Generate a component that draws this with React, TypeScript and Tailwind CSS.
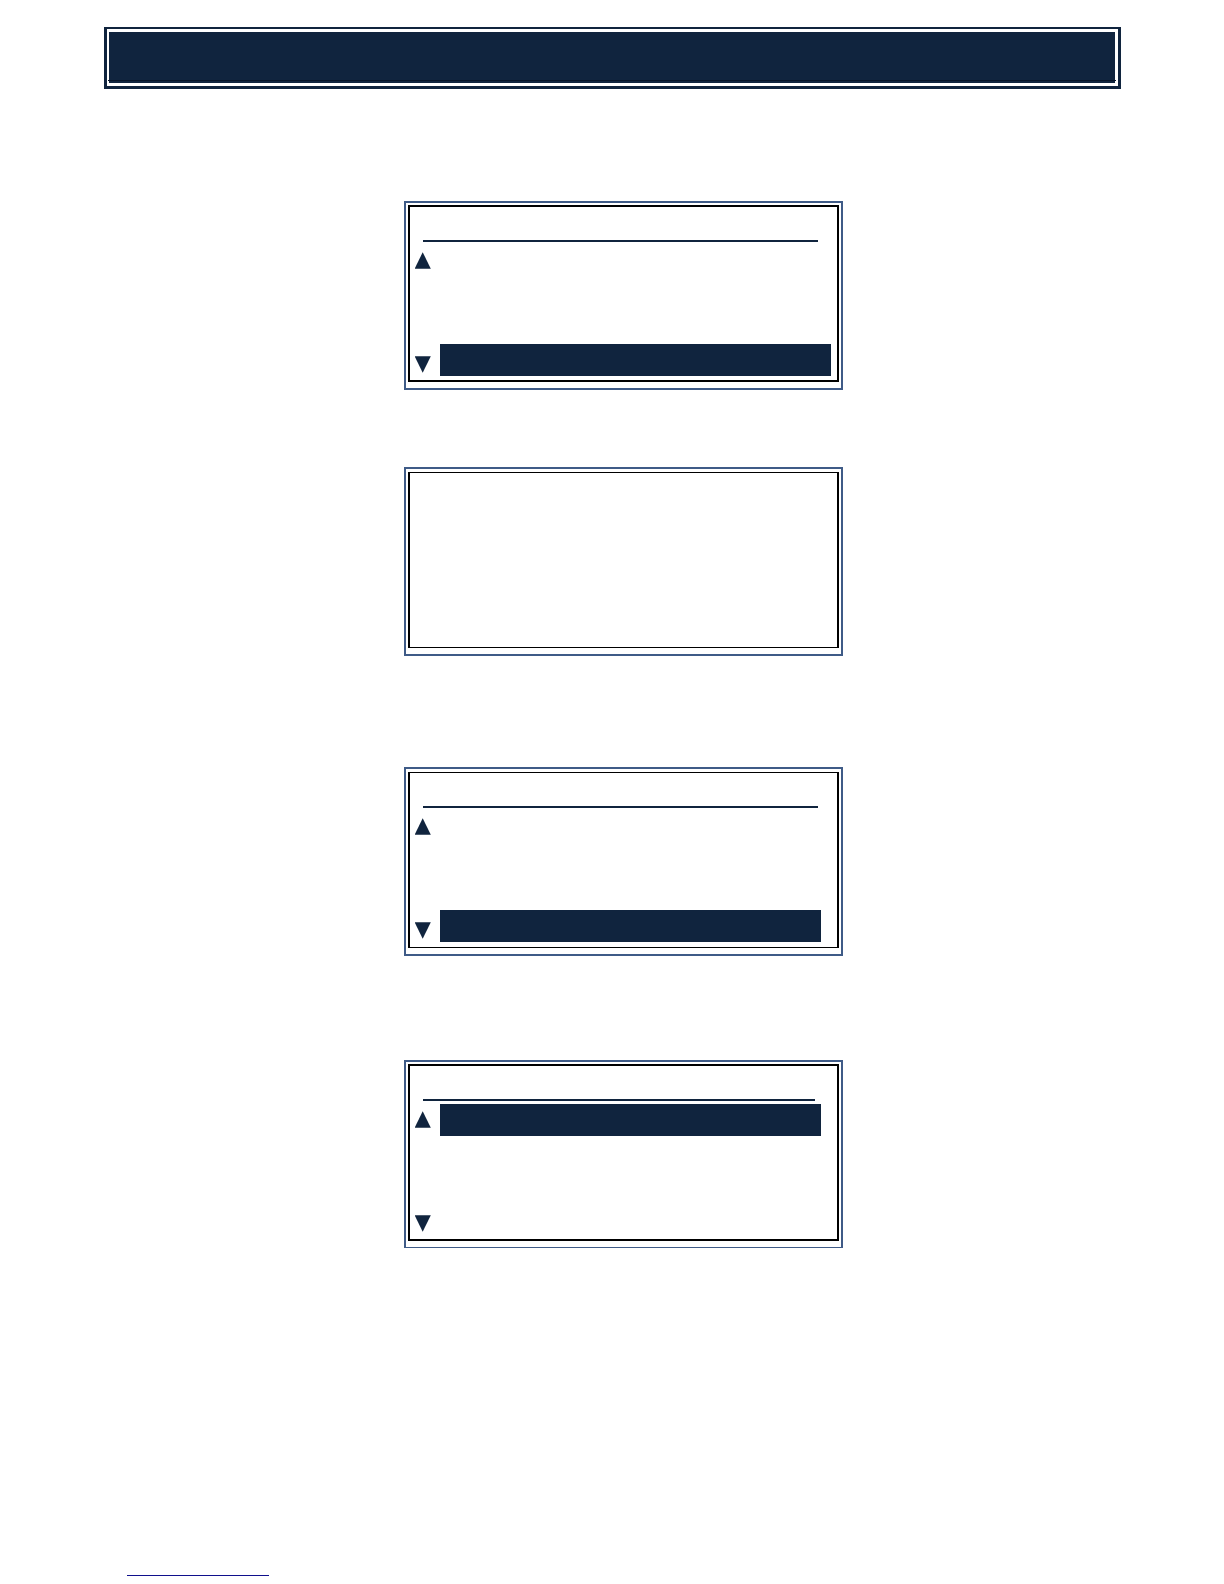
import React from "react";
import clsx from "clsx";

type ScreenProps = {
  thin?: boolean;
  className?: string;
  ruleClass?: string;
  barClass?: string;
  selected?: number;
  empty?: boolean;
};

const rows = [0, 1, 2, 3];

const Arrow = ({ down = false }: { down?: boolean }) => (
  <svg
    width="16"
    height="17"
    viewBox="0 0 16 17"
    fill="#10243e"
    aria-hidden="true"
  >
    <path d={down ? "M-0.3 0.3H15.8L7.7 16.8Z" : "M7.7 0.2L15.8 16.7H-0.3Z"} />
  </svg>
);

const Screen = ({
  thin = false,
  className,
  ruleClass = "mr-[19px]",
  barClass = "mr-4",
  selected,
  empty = false,
}: ScreenProps) => (
  <section
    className={clsx(
      "w-[439px] max-w-full border-2 border-[#3f5b87] px-[2px] pb-[6px]",
      thin ? "pt-[3px]" : "pt-[2px]",
      className
    )}
  >
    <div
      className={clsx(
        "border-x-2 border-black",
        thin ? "border-y pb-[5px]" : "border-y-2 pb-1"
      )}
    >
      {/* title line */}
      <div
        className={clsx(
          "ml-[13px] h-[35px] border-b-2",
          empty ? "border-transparent" : "border-[#10243e]",
          ruleClass
        )}
      />
      <div className="flex gap-[9px] pt-[3px] pl-[5px]">
        <div className="flex w-4 flex-col justify-between pt-[7px] pb-[3px]">
          {!empty && (
            <>
              <Arrow />
              <Arrow down />
            </>
          )}
        </div>
        <div className="flex flex-1 flex-col gap-px">
          {rows.map((row) => (
            <div
              key={row}
              className={clsx(
                "h-8",
                barClass,
                row === selected && "bg-[#10243e]"
              )}
            />
          ))}
        </div>
      </div>
    </div>
  </section>
);

const App = () => {
  return (
    <div className="min-h-screen bg-white pt-[27px] pb-2">
      <header className="mr-[103px] ml-[104px] border-x-[3px] border-t-2 border-b-[3px] border-[#10243e] py-[3px] pr-[3px] pl-[2px]">
        <div className="h-12 bg-[#10243e]" />
        <div className="-mx-px h-px bg-[#061428]" />
        <div className="h-[2px] bg-[#10243e]" />
      </header>

      <main className="flex flex-col items-center pt-28 pl-[23px]">
        <Screen selected={3} barClass="mr-[6px]" />
        <Screen thin empty className="mt-[77px]" />
        <Screen thin selected={3} className="mt-[111px]" />
        <Screen
          selected={0}
          ruleClass="mr-[22px]"
          className="mt-[104px] border-b"
        />
      </main>

      <footer className="pt-[327px] pl-[127px]">
        <div className="h-px w-[142px] bg-[#10108c]" />
      </footer>
    </div>
  );
};

export default App;
